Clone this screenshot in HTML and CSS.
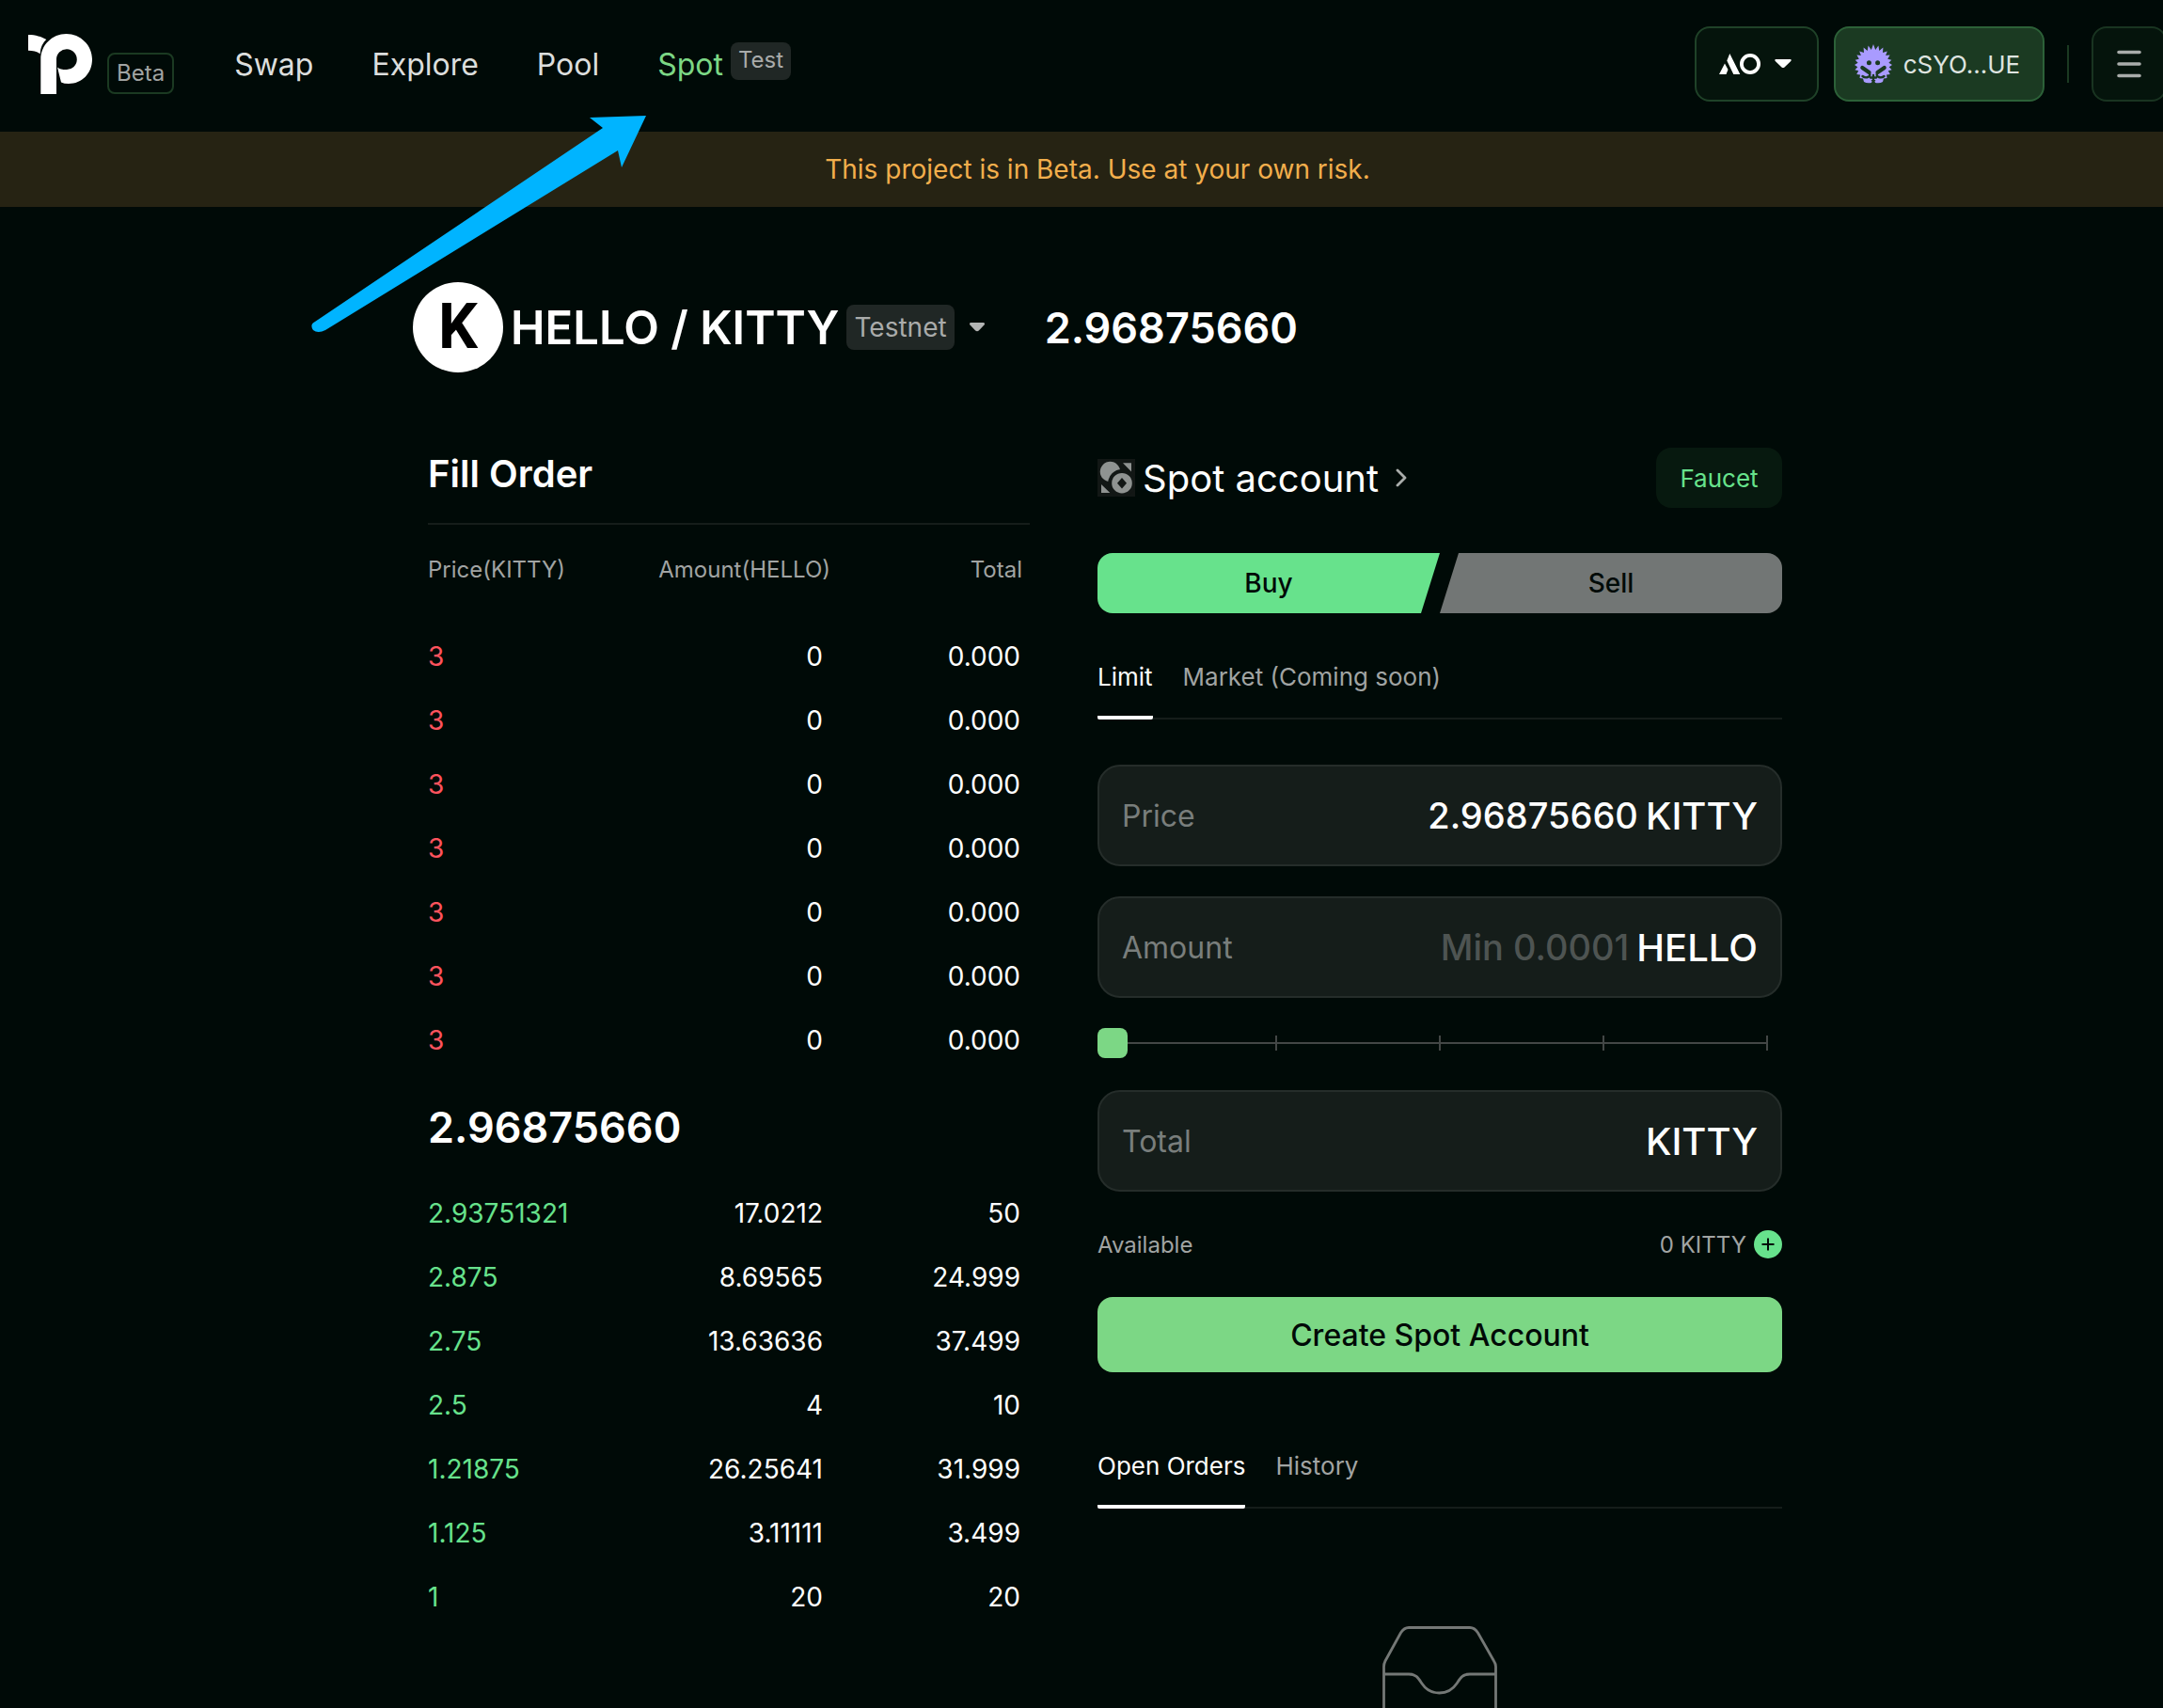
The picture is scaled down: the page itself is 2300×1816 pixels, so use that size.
FILE: index.html
```html
<!DOCTYPE html>
<html lang="en">
<head>
<meta charset="utf-8">
<title>Spot – HELLO / KITTY</title>
<link rel="stylesheet" href="styles.css">
</head>
<body>
<div class="page">
  <header class="topbar">
    <a class="brand" href="#" aria-label="Home">
      <svg class="brand-logo" width="68" height="64" viewBox="0 0 68 64" fill="#fff">
        <path d="M0 1C8 1 14 3 19.3 6 15 10 13 15 12.7 21.3 9 18.5 5 17.7 0 17.7Z"/>
        <path d="M13.3 64V27C13.3 12 25.5 0 40.5 0S68 12 68 27 57 53 43 53Q38 53 35 51.5L31 35.5C33 37.5 36.5 38 40.3 38A10.9 10.9 0 1 0 30 27V64Z"/>
      </svg>
      <span class="beta">Beta</span>
    </a>
    <nav class="nav">
      <a href="#">Swap</a>
      <a href="#">Explore</a>
      <a href="#">Pool</a>
      <a href="#" class="active">Spot<span class="tag tag-small">Test</span></a>
    </nav>
    <div class="actions">
      <button class="btn-outline chain" aria-label="AO network">
        <svg width="44" height="22" viewBox="0 0 44 22">
          <path d="M0 22 6 10.5 9.5 17 7.5 22ZM11.3 0 22.3 22H15.3L8.3 7.5Z" fill="#fff"/>
          <circle cx="33" cy="11" r="9.1" fill="none" stroke="#fff" stroke-width="3.8"/>
        </svg>
        <svg width="18" height="10" viewBox="0 0 18 10" fill="#fff"><path d="M1 0H17Q18.500 .8 17 2.200L10.500 8.500Q9 9.500 7.500 8.500L1 2.200Q-.5 .8 1 0Z"/></svg>
      </button>
      <button class="btn-outline account">
        <svg width="40" height="42" viewBox="0 0 40 42">
          <path fill="#a99bff" d="M20 0 22.200 6 25.400 1.500 26.300 7 30.400 3.500 30 9 34.800 7.500 33.100 12 37.600 11.500 35.200 15.700 39.300 16.800 36.400 19.800 40 22 36.700 24.200 39.600 27.200 35.800 28.300 37.800 32 34 32.500 34.500 36 31 36.500 30 40Q27 42 22 41 20.500 39.500 22.500 38H17.500Q19.500 39.500 18 41 13 42 10 40L9 36.500 5.500 36 6 32.500 2.200 32 4.200 28.300.4 27.200 3.300 24.200 0 22 3.600 19.800.7 16.800 4.800 15.700 2.400 11.500 6.900 12 5.200 7.500 10 9 9.600 3.500 13.700 7 14.600 1.500 17.800 6Z"/>
          <g stroke="#1b3a22" fill="none" stroke-linecap="round">
            <path stroke-width="4.200" d="M8.300 25 15.500 30M31.700 25 24.500 30"/>
            <path stroke-width="2.400" d="M16 31Q17 34 14 35 11 36 8.500 34M24 31Q23 34 26 35 29 36 31.500 34M17 35.500H23M20 33V42"/>
          </g>
          <circle cx="15.400" cy="19.700" r="2.500" fill="#1b3a22"/><circle cx="24.600" cy="19.700" r="2.500" fill="#1b3a22"/>
        </svg>
        cSYO...UE
      </button>
      <span class="divider"></span>
      <button class="btn-outline menu" aria-label="Menu">
        <svg width="26" height="30" viewBox="0 0 26 30" stroke="#a9adab" stroke-width="3.600" stroke-linecap="round"><path d="M2 2.500H24M2 15H24M2 27.500H24"/></svg>
      </button>
    </div>
    <svg class="pointer" width="356" height="232" viewBox="0 0 356 232" fill="#00b4ff"><path d="M356 0 330 55 326 37 15 228Q7 232 2 228-2 222 4 219L310 13 296 2Z"/></svg>
  </header>

  <p class="notice">This project is in Beta. Use at your own risk.</p>

  <main class="content">
    <section class="pair">
      <span class="coin">K</span>
      <button class="pair-select">
        <span>HELLO / KITTY</span>
        <span class="tag tag-large">Testnet</span>
        <svg class="pair-caret" width="16" height="10" viewBox="0 0 16 10" fill="#b3b5b4"><path d="M1.500 0H14.500Q17 .5 15.500 2.500L9.800 8.500Q8 10 6.200 8.500L.5 2.500Q-1 .5 1.500 0Z"/></svg>
      </button>
      <strong class="price">2.96875660</strong>
    </section>

    <div class="columns">
      <section class="book">
        <h2>Fill Order</h2>
        <table>
          <thead><tr><th>Price(KITTY)</th><th>Amount(HELLO)</th><th>Total</th></tr></thead>
          <tbody class="asks">
            <tr><td>3</td><td>0</td><td>0.000</td></tr>
            <tr><td>3</td><td>0</td><td>0.000</td></tr>
            <tr><td>3</td><td>0</td><td>0.000</td></tr>
            <tr><td>3</td><td>0</td><td>0.000</td></tr>
            <tr><td>3</td><td>0</td><td>0.000</td></tr>
            <tr><td>3</td><td>0</td><td>0.000</td></tr>
            <tr><td>3</td><td>0</td><td>0.000</td></tr>
          </tbody>
          <tbody><tr><td class="price last" colspan="3">2.96875660</td></tr></tbody>
          <tbody class="bids">
            <tr><td>2.93751321</td><td>17.0212</td><td>50</td></tr>
            <tr><td>2.875</td><td>8.69565</td><td>24.999</td></tr>
            <tr><td>2.75</td><td>13.63636</td><td>37.499</td></tr>
            <tr><td>2.5</td><td>4</td><td>10</td></tr>
            <tr><td>1.21875</td><td>26.25641</td><td>31.999</td></tr>
            <tr><td>1.125</td><td>3.11111</td><td>3.499</td></tr>
            <tr><td>1</td><td>20</td><td>20</td></tr>
          </tbody>
        </table>
      </section>

      <section class="trade">
        <div class="trade-head">
          <a href="#" class="spot-link">
            <svg width="40" height="40" viewBox="0 0 40 40">
              <rect width="40" height="40" fill="#121715"/>
              <g fill="#8f9391"><circle cx="13.500" cy="13.500" r="10.700"/><path d="M27 4.300H36V13.500ZM4 27V36H13.300Z"/>
              <circle cx="26" cy="25.700" r="12.800" stroke="#121715" stroke-width="4"/></g>
              <path fill="#121715" d="M26 20 31 25.700 26 31.400 21 25.700Z"/>
            </svg>
            Spot account
            <svg class="chevron" width="12" height="20" viewBox="0 0 12 20" fill="none" stroke="#a9adab" stroke-width="2.800" stroke-linecap="round" stroke-linejoin="round"><path d="M2 2 10 10 2 18"/></svg>
          </a>
          <button class="faucet">Faucet</button>
        </div>

        <div class="sides">
          <button class="side buy">Buy</button>
          <button class="side sell">Sell</button>
        </div>

        <div class="tabs">
          <button class="tab current">Limit</button>
          <button class="tab">Market (Coming soon)</button>
        </div>

        <form class="order">
          <label class="field"><span class="name">Price</span><input type="text" value="2.96875660"><span class="unit">KITTY</span></label>
          <label class="field"><span class="name">Amount</span><input type="text" placeholder="Min 0.0001"><span class="unit">HELLO</span></label>
          <div class="slider">
            <div class="ticks"><i></i><i></i><i></i><i></i><i></i></div>
            <input type="range" min="0" max="100" value="0" aria-label="Share of balance">
          </div>
          <label class="field"><span class="name">Total</span><input type="text"><span class="unit">KITTY</span></label>
          <div class="available">
            <span>Available</span>
            <span class="balance">0 KITTY
              <button type="button" class="add" aria-label="Deposit"><svg width="30" height="30" viewBox="0 0 30 30"><circle cx="15" cy="15" r="15" fill="#67e28c"/><path d="M15 8.500V21.500M8.500 15H21.500" stroke="#000a07" stroke-width="2"/></svg></button>
            </span>
          </div>
          <button type="button" class="submit">Create Spot Account</button>
        </form>

        <div class="tabs orders-tabs">
          <button class="tab current">Open Orders</button>
          <button class="tab">History</button>
        </div>
        <div class="empty">
          <svg width="122" height="124" viewBox="0 0 122 124" fill="none" stroke="#747876" stroke-width="2.800"><path d="M1.500 51V43Q1.500 40 3 37L19.500 7Q23 1.500 28 1.500H93Q98 1.500 101.500 7L118.500 37Q120.500 40 120.500 43V112Q120.500 122 110 122H12Q1.500 122 1.500 112V51H28C36 51 38 55 42 61 46 67 52 71 60.500 71S75 67 79 61C83 55 85 51 93 51H120"/></svg>
        </div>
      </section>
    </div>
  </main>
</div>
</body>
</html>
```
FILE: styles.css
```css
:root {
  --bg: #000a07;
  --green: #67e28c;
  --leaf: #7cd785;
  --muted: #a1a4a3;
  --line: #151d1a;
}

* { box-sizing: border-box; }

html { overflow: hidden; background: var(--bg); }

body {
  margin: 0;
  background: var(--bg);
  color: #fff;
  font-family: Inter, "Liberation Sans", sans-serif;
  font-size: 28px;
}

button, input { font: inherit; color: inherit; }
button { background: none; border: 0; padding: 0; margin: 0; cursor: pointer; }
a { color: inherit; text-decoration: none; }
svg { display: block; flex: none; }

/* the page is slightly wider than the window and runs off its right edge */
.page { width: calc(100% + 34px); }

/* top bar */
.topbar {
  position: relative;
  display: flex;
  align-items: center;
  height: 140px;
  padding: 0 30px 4px;
}
.brand { display: flex; align-items: flex-end; gap: 16px; }
.beta {
  height: 44px;
  padding: 0 8px;
  border: 2px solid #1b3a22;
  border-radius: 8px;
  font-size: 24px;
  line-height: 40px;
  color: var(--muted);
}
.nav { display: flex; gap: 62px; margin-left: 64px; font-size: 32px; color: #dcdedd; }
.active { display: flex; gap: 8px; color: var(--leaf); }
.tag { background: #202725; border-radius: 8px; color: #a9abaa; }
.tag-small { height: 40px; padding: 0 8px; margin: -4px 0 0; font-size: 24px; line-height: 38px; }
.tag-large { height: 48px; padding: 0 8px; font-size: 28px; line-height: 48px; font-weight: 400; }
.actions { display: flex; align-items: center; gap: 16px; margin-left: auto; }
.btn-outline {
  display: flex;
  align-items: center;
  justify-content: center;
  height: 80px;
  border: 2px solid #1f4228;
  border-radius: 16px;
  background: #05140c;
}
.chain { width: 132px; gap: 15px; padding-right: 4px; }
.account { width: 224px; gap: 12px; padding-right: 4px; background: #1b3a22; border-color: #2c6138; font-size: 26px; color: #dfe4e0; }
.divider { width: 2px; height: 40px; margin: 0 8px; background: #1b3a22; }
.menu { width: 80px; border-color: #193421; }
.pointer { position: absolute; left: 331px; top: 123px; z-index: 1; }

.notice {
  margin: 0;
  height: 80px;
  line-height: 80px;
  text-align: center;
  background: #262313;
  color: #f2ae4c;
}

/* pair heading */
.content { max-width: 1456px; margin: 0 auto; padding-top: 80px; }
.pair { display: flex; align-items: center; height: 96px; }
.coin {
  width: 96px;
  height: 96px;
  margin-right: 8px;
  border-radius: 50%;
  background: #fff;
  color: #000;
  font: 700 66px/96px Roboto, sans-serif;
  text-align: center;
}
.pair-select { display: flex; align-items: center; gap: 8px; font-size: 49px; font-weight: 600; }
.pair-caret { margin-left: 8px; }
.price { font-size: 45px; font-weight: 600; }
.pair .price { margin-left: 64px; }

.columns { display: grid; grid-template-columns: 640px minmax(0, 1fr); gap: 72px; padding: 80px 0 0 16px; }

/* order book */
.book h2 {
  margin: 0;
  height: 82px;
  border-bottom: 2px solid var(--line);
  font-size: 40px;
  font-weight: 600;
  line-height: 56px;
}
.book table { width: 100%; table-layout: fixed; border-collapse: collapse; }
.book th {
  height: 106px;
  padding: 33px 0 0;
  vertical-align: top;
  font-size: 24px;
  font-weight: 400;
  line-height: 30px;
  text-align: right;
  color: var(--muted);
}
.book th:first-child, .book td:first-child { text-align: left; padding-right: 0; }
.book th:first-child { width: 200px; }
.book th:nth-child(2) { width: 228px; }
.book th:last-child { padding-right: 8px; }
.book td { height: 68px; padding: 0 10px 0 0; text-align: right; }
.book td:nth-child(2) { padding-right: 8px; }
.asks td:first-child { color: #ff535d; }
.bids td:first-child { color: var(--green); }
.book td.last { height: 116px; }

/* trade panel */
.trade-head { display: flex; align-items: center; justify-content: space-between; height: 64px; }
.spot-link { display: flex; align-items: center; gap: 8px; font-size: 40px; }
.chevron { margin-left: 10px; }
.faucet { width: 134px; height: 64px; border-radius: 16px; background: #07190f; color: var(--green); font-size: 26px; }

.sides { display: grid; grid-template-columns: 1fr 1fr; margin-top: 48px; }
.side { height: 64px; color: #000a07; font-weight: 500; }
.buy { background: var(--green); border-radius: 16px 0 0 16px; clip-path: polygon(0 0, 100% 0, calc(100% - 20px) 100%, 0 100%); }
.sell { background: #727675; border-radius: 0 16px 16px 0; clip-path: polygon(20px 0, 100% 0, 100% 100%, 0 100%); }

.tabs { display: flex; gap: 32px; height: 73px; margin-top: 40px; border-bottom: 2px solid var(--line); font-size: 26px; }
.tab { height: 73px; padding-bottom: 15px; border-bottom: 4px solid transparent; color: var(--muted); }
.tab.current { border-color: #fff; color: #fff; border-radius: 2px; }
.orders-tabs { margin-top: 72px; }

.field {
  display: flex;
  align-items: center;
  gap: 8px;
  height: 108px;
  padding: 0 24px;
  border: 2px solid #252d2a;
  border-radius: 24px;
  background: #151d1a;
  font-size: 40px;
  font-weight: 500;
}
.field + .field { margin-top: 32px; }
.order { margin-top: 48px; }
.name { font-size: 32px; font-weight: 400; color: #797e7c; }
.field input { flex: 1; min-width: 0; padding: 0; border: 0; outline: 0; background: none; font-size: 38px; text-align: right; }
.field input::placeholder { color: #4e5452; opacity: 1; }

.slider { display: grid; margin: 32px 0 34px; }
.slider > * { grid-area: 1 / 1; }
.ticks {
  display: flex;
  justify-content: space-between;
  align-items: center;
  margin: 0 15px;
  background: linear-gradient(#434746, #434746) center / 100% 2px no-repeat;
}
.ticks i { width: 2px; height: 16px; background: #434746; }
.slider input { appearance: none; width: 100%; height: 32px; margin: 0; background: none; }
.slider input::-webkit-slider-thumb { appearance: none; width: 32px; height: 32px; border-radius: 8px; background: var(--leaf); }

.available { display: flex; justify-content: space-between; align-items: center; height: 30px; margin: 41px 0; font-size: 24px; color: var(--muted); }
.balance { display: flex; align-items: center; gap: 8px; }
.submit { width: 100%; height: 80px; border-radius: 16px; background: var(--leaf); color: #000a07; font-size: 32px; font-weight: 500; }

.empty { display: flex; justify-content: center; padding-top: 125px; }
```
